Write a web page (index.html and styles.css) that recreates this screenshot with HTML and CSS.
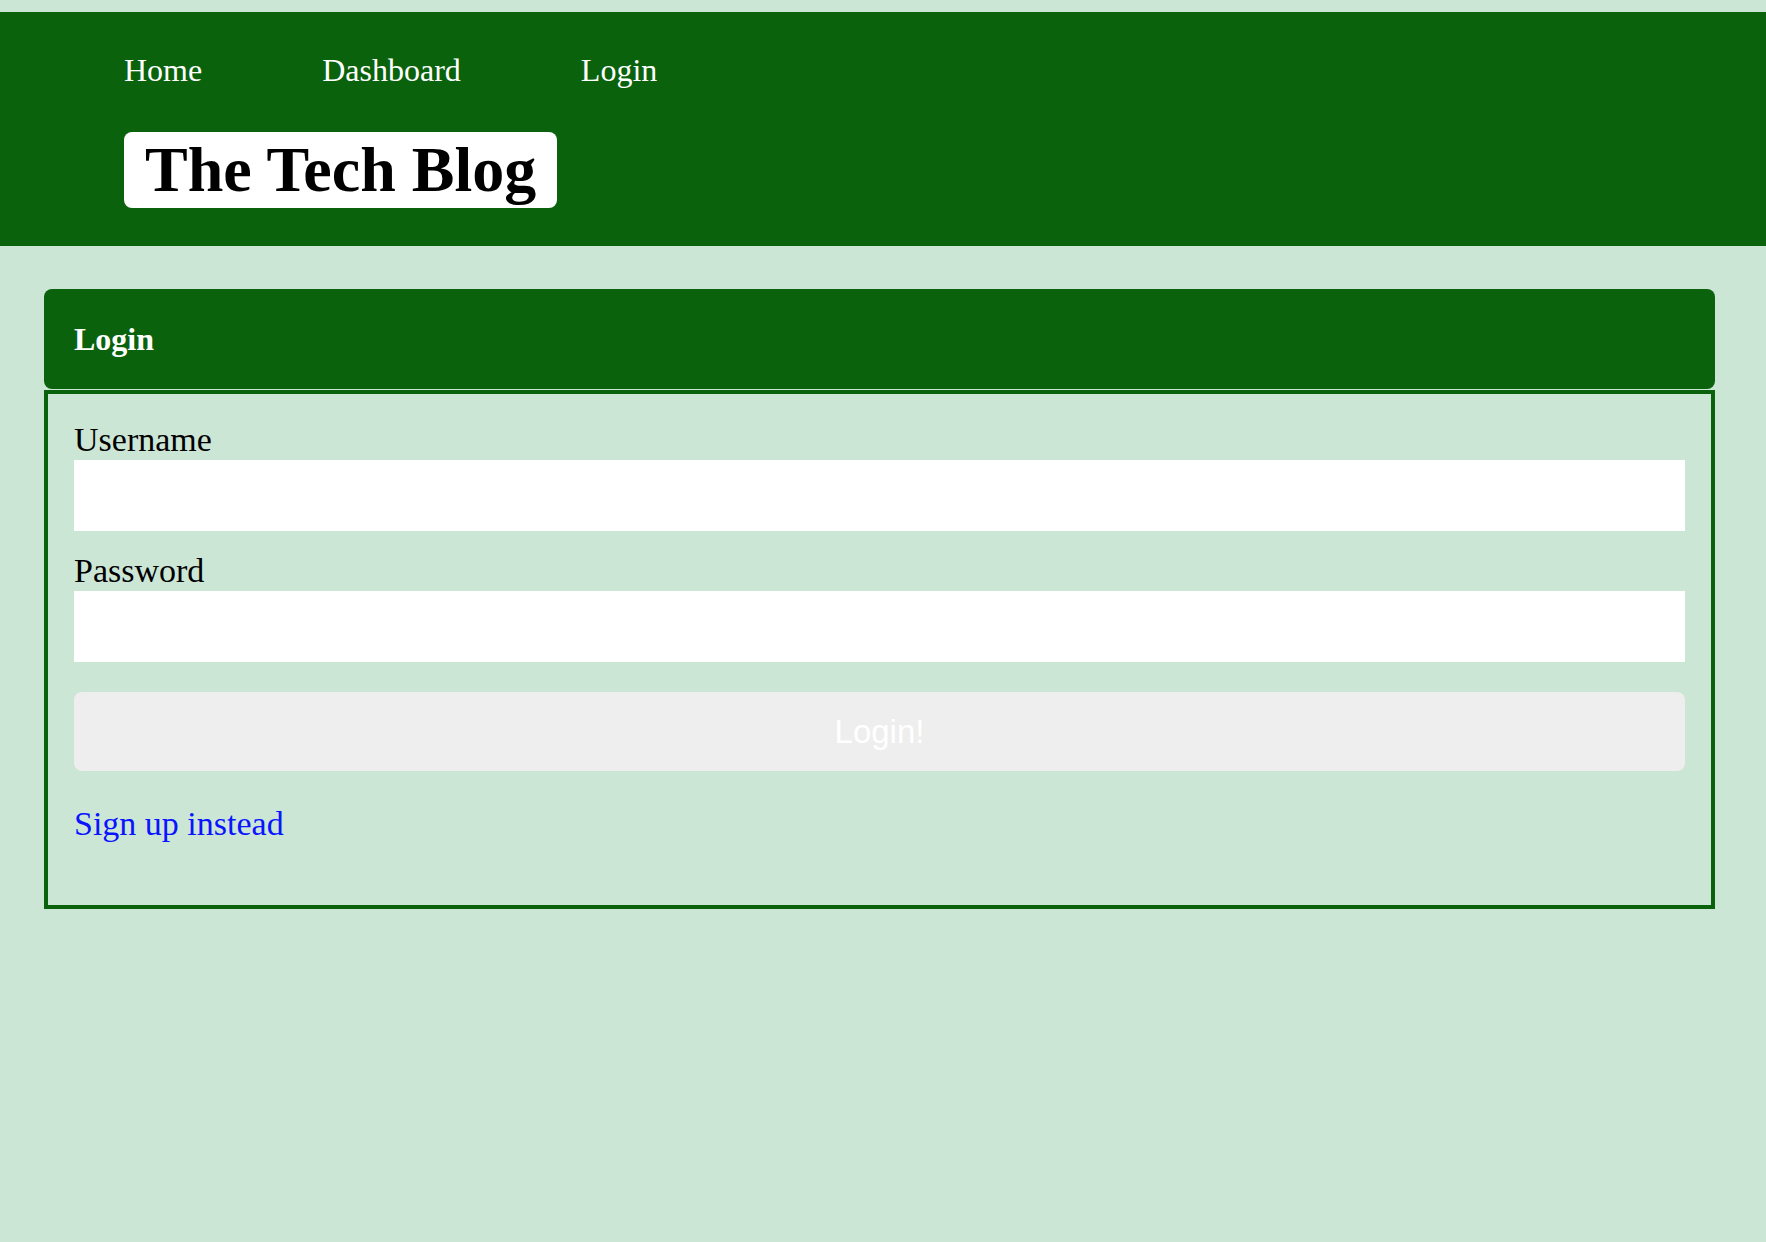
FILE: index.html
```html
<!DOCTYPE html>
<html lang="en">
<head>
<meta charset="utf-8">
<title>The Tech Blog</title>
<link rel="stylesheet" href="styles.css">
</head>
<body>
<header class="site-header">
  <nav class="nav">
    <a class="nav-link" href="#">Home</a>
    <a class="nav-link" href="#">Dashboard</a>
    <a class="nav-link" href="#">Login</a>
  </nav>
  <div class="brand-row">
    <h1 class="brand">The Tech Blog</h1>
  </div>
</header>
<main class="page">
  <section class="card">
    <div class="card-header">Login</div>
    <form class="card-body">
      <label class="field-label" for="username">Username</label>
      <input class="field-input" id="username" type="text">
      <label class="field-label field-label--spaced" for="password">Password</label>
      <input class="field-input" id="password" type="password">
      <button class="submit" type="button">Login!</button>
      <a class="alt-link" href="#">Sign up instead</a>
    </form>
  </section>
</main>
</body>
</html>
```
FILE: styles.css
```css
html, body {
  margin: 0;
  padding: 0;
}

body {
  background: #cce6d6;
  padding-top: 12px;
  font-family: "Liberation Serif", "Times New Roman", serif;
  color: #000;
}

.site-header {
  background: #0a620c;
  padding: 40px 0 38px 124px;
}

.nav {
  display: flex;
  gap: 120px;
  font-size: 32px;
  line-height: 37px;
}

.nav-link {
  color: #fff;
  text-decoration: none;
}

.brand-row {
  margin-top: 43px;
}

.brand {
  display: inline-block;
  margin: 0;
  background: #fff;
  border-radius: 8px;
  padding: 2px 21px;
  font-size: 64px;
  line-height: 72px;
  font-weight: bold;
  color: #000;
}

.page {
  padding: 43px 51px 0 44px;
}

.card-header {
  background: #0a620c;
  border-radius: 8px;
  height: 100px;
  box-sizing: border-box;
  padding-left: 30px;
  display: flex;
  align-items: center;
  color: #fff;
  font-weight: bold;
  font-size: 32px;
  line-height: 37px;
}

.card-body {
  margin: 1px 0 0;
  border: 4px solid #0a620c;
  padding: 26px 26px 62px;
}

.field-label {
  display: block;
  font-size: 34px;
  line-height: 40px;
}

.field-label--spaced {
  margin-top: 20px;
}

.field-input {
  display: block;
  width: 100%;
  height: 71px;
  box-sizing: border-box;
  margin: 0;
  border: none;
  background: #fff;
  padding: 0 12px;
  font-size: 28px;
  font-family: "Liberation Sans", Arial, sans-serif;
  outline: none;
}

.submit {
  display: block;
  width: 100%;
  height: 79px;
  margin-top: 30px;
  border: none;
  border-radius: 8px;
  background: #eeeeee;
  color: #fff;
  font-family: "Liberation Sans", Arial, sans-serif;
  font-size: 33px;
  padding: 0;
}

.alt-link {
  display: block;
  width: fit-content;
  margin-top: 33px;
  font-size: 34px;
  line-height: 39px;
  color: #0a14ff;
  text-decoration: none;
}
```
